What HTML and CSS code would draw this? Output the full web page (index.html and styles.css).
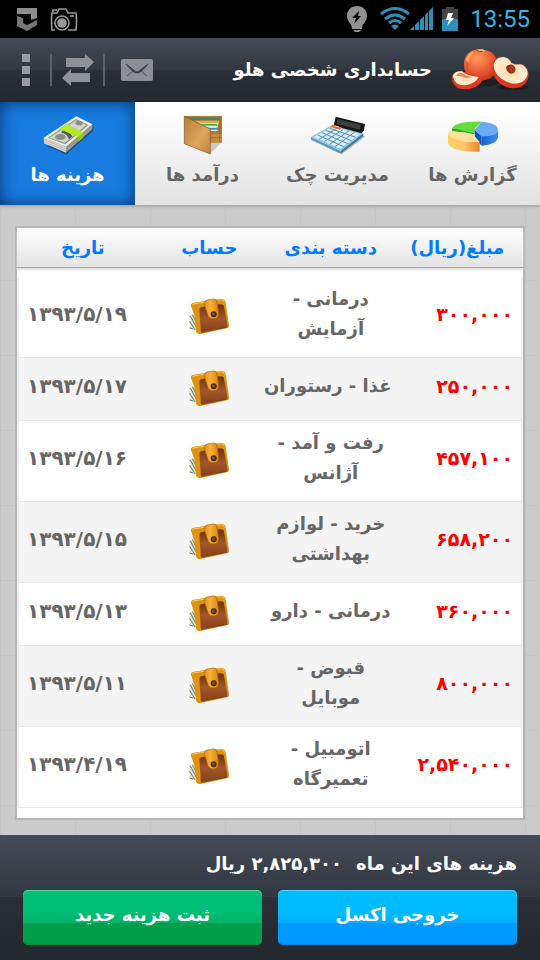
FILE: index.html
```html
<!DOCTYPE html>
<html lang="fa" dir="rtl">
<head>
    <meta charset="UTF-8">
    <meta name="viewport" content="width=device-width, initial-scale=1.0">
    <title>حسابداری شخصی هلو</title>
    <link rel="stylesheet" href="styles.css">
</head>
<body>
    <!-- Shared wallet icon -->
    <svg class="defs" width="0" height="0" aria-hidden="true">
        <defs>
            <linearGradient id="leather" x1="0" y1="0" x2="0" y2="1">
                <stop offset="0" stop-color="#6a3312"/>
                <stop offset=".5" stop-color="#a3562a"/>
                <stop offset="1" stop-color="#84401a"/>
            </linearGradient>
            <linearGradient id="strap" x1="0" y1="0" x2="1" y2="0">
                <stop offset="0" stop-color="#e08c10"/>
                <stop offset=".4" stop-color="#f8b13c"/>
                <stop offset="1" stop-color="#d98609"/>
            </linearGradient>
        </defs>
        <symbol id="wallet" viewBox="55 55 126 114">
            <path d="M57 112L74 104L84 156L57 149L63 138L57 130L62 120Z" fill="#dde3d5"/>
            <path d="M62 112L80 146M60 128L76 154M68 108L82 134M60 148L70 151" stroke="#6c8064" stroke-width="3"/>
            <path d="M64 82Q62 75 72 72L152 60Q166 60 168 70L178 140Q179 148 172 149L92 166Q79 168 79 155L74 110Z" fill="#df920f"/>
            <path d="M68 80Q68 76 76 75L152 63Q163 62 165 72" fill="none" stroke="#ffc555" stroke-width="3"/>
            <path d="M89 96Q88 86 98 85L150 77Q162 76 163 84L173 136Q174 145 166 147L95 161Q92 158 93 150Z" fill="url(#leather)"/>
            <path d="M94 162L174 145" stroke="#6b3010" stroke-width="2"/>
            <path d="M103 74Q104 66 112 64L132 61Q141 61 142 70L147 104Q147 119 133 121Q118 121 114 108Z" fill="url(#strap)" stroke="#a86608" stroke-width="2"/>
            <circle cx="132" cy="107" r="9" fill="#4a2a1c"/>
            <circle cx="132" cy="106" r="4" fill="#80604e"/>
        </symbol>
    </svg>

    <!-- Status bar -->
    <div class="status-bar" dir="ltr">
        <div class="status-group">
            <svg width="22" height="26" viewBox="0 0 22 26">
                <path d="M1 2H21V12L15 14V8H1Z" fill="#8d8d8d"/>
                <path d="M1 10L7 12V17L11 19L21 14V19L11 25L1 20Z" fill="#777"/>
            </svg>
            <svg class="camera" width="28" height="26" viewBox="0 0 28 26" fill="none" stroke="#999" stroke-width="1.6">
                <path d="M5 24H2Q1 14 2 7H7L9 3H16L18 7H26Q27 14 26 24H18M3 6V4H7"/>
                <circle cx="12" cy="17" r="7"/>
                <circle cx="12" cy="17" r="4" fill="#999"/>
                <path d="M20 10h4"/>
            </svg>
        </div>
        <div class="status-group">
            <svg width="22" height="28" viewBox="0 0 22 28">
                <path d="M11 1C5 1 1 5 1 11C1 17 6 18 6 24H16C16 18 21 17 21 11C21 5 17 1 11 1ZM7 25H15L13 27H9Z" fill="#919191"/>
                <path d="M13 6L6 13H10L8 19L15 11H12Z" fill="#000"/>
            </svg>
            <svg class="wifi" width="30" height="24" viewBox="0 0 30 24" fill="none" stroke="#2d8fb8" stroke-width="3">
                <path d="M1 7Q15 -4 29 7M5 12Q15 4 25 12M9 16Q15 11 21 16"/>
                <path d="M11 19Q15 16 19 19L15 23Z" fill="#2d8fb8" stroke="none"/>
            </svg>
            <svg width="24" height="24" viewBox="0 0 24 24" fill="#2d8fb8">
                <path d="M0 23L4 19V23ZM5 18L9 14V23H5ZM10 13L14 9V23H10ZM15 8L18 5V23H15ZM19 4L23 0V23H19Z"/>
            </svg>
            <svg class="battery" width="16" height="24" viewBox="0 0 16 24">
                <path d="M4 0H12V2H16V12H0V2H4Z" fill="#444"/>
                <path d="M0 12H16V24H0Z" fill="#2d8fb8"/>
                <path d="M6 6H11L9 11H12L5 19L7 13H4Z" fill="#fff"/>
            </svg>
            <span class="clock">13:55</span>
        </div>
    </div>

    <!-- Title bar -->
    <header class="title-bar">
        <svg class="logo" width="88" height="54" viewBox="0 0 264 162">
            <defs>
                <radialGradient id="peach" cx=".4" cy=".3" r=".75">
                    <stop offset="0" stop-color="#ff9a5c"/>
                    <stop offset=".5" stop-color="#f0643a"/>
                    <stop offset="1" stop-color="#c0301a"/>
                </radialGradient>
                <radialGradient id="flesh">
                    <stop offset="0" stop-color="#ffd9a4"/>
                    <stop offset="1" stop-color="#fff0d6"/>
                </radialGradient>
            </defs>
            <ellipse cx="110" cy="118" rx="50" ry="12" fill="#1b1e24"/>
            <ellipse cx="200" cy="132" rx="46" ry="9" fill="#1b1e24"/>
            <path d="M54 70C52 40 68 22 90 20Q104 16 118 22C142 26 155 44 154 68C152 98 132 112 106 112C76 112 56 98 54 70Z" fill="url(#peach)"/>
            <path d="M88 22C68 34 60 54 66 84" fill="none" stroke="#d94c26" stroke-width="3"/>
            <path d="M60 50Q66 30 86 24Q70 40 66 60Z" fill="#ffb04f"/>
            <path d="M90 20Q98 30 118 24L110 18Z" fill="#f5c458"/>
            <path d="M92 22Q100 28 110 25" fill="none" stroke="#7c3d16" stroke-width="3"/>
            <path d="M18 98Q16 132 50 139Q96 140 110 112Q108 104 98 102L46 84Q26 84 18 98Z" fill="#e03a22"/>
            <path d="M21 98Q28 82 48 85Q58 98 98 102Q92 118 64 126Q24 130 21 98Z" fill="url(#flesh)"/>
            <path d="M30 98Q40 84 52 92Q60 100 76 102Q60 108 50 101Q40 98 30 98Z" fill="#e58a56"/>
            <path d="M140 72C140 48 156 38 174 42Q190 44 196 58Q206 66 224 62C242 68 250 82 247 102C240 128 222 138 194 135C160 130 138 104 140 72Z" fill="#e0351f"/>
            <path d="M143 66C146 48 160 40 176 43Q190 46 196 60Q208 68 222 64C240 68 248 84 244 98C236 116 220 124 196 121C166 112 144 94 143 66Z" fill="url(#flesh)"/>
            <path d="M180 72Q186 62 200 65Q211 72 208 84Q202 95 191 91Q180 84 180 72Z" fill="#93321a"/>
            <path d="M188 70L199 87M196 68L204 80" stroke="#b85a36" stroke-width="2"/>
        </svg>
        <h1>حسابداری شخصی هلو</h1>
        <div class="actions">
            <button type="button" aria-label="پیام ها">
                <svg width="32" height="22" viewBox="0 0 32 22">
                    <rect width="32" height="22" rx="2" fill="#8c9096"/>
                    <path d="M5 5L14 12Q16 14 18 12L27 5Q20 14 16 14Q12 14 5 5Z" fill="#3c424b" stroke="#3c424b"/>
                    <path d="M6 17L12 12M26 17L20 12" stroke="#4b515a"/>
                </svg>
            </button>
            <button type="button" aria-label="انتقال">
                <svg width="32" height="32" viewBox="0 0 32 32" fill="#8e9298">
                    <path d="M4 4H23V0L32 8L23 17V13H4ZM28 19H9V15L0 24L9 32V28H28Z"/>
                </svg>
            </button>
            <button type="button" aria-label="منو">
                <svg width="8" height="32" viewBox="0 0 8 32" fill="#989ca2">
                    <path d="M0 0H8V8H0ZM0 12H8V20H0ZM0 24H8V32H0Z"/>
                </svg>
            </button>
        </div>
    </header>

    <!-- Tabs -->
    <nav class="tabs">
        <a class="tab" href="#reports">
            <svg width="52" height="40" viewBox="528 40 156 120">
                <defs>
                    <linearGradient id="pieGold" x1="0" y1="0" x2="1" y2="0">
                        <stop offset="0" stop-color="#ffd06a"/>
                        <stop offset=".5" stop-color="#ffc668"/>
                        <stop offset="1" stop-color="#e8862a"/>
                    </linearGradient>
                    <linearGradient id="pieBlue" x1="0" y1="0" x2="1" y2="0">
                        <stop offset="0" stop-color="#1b62cf"/>
                        <stop offset="1" stop-color="#3c8cf0"/>
                    </linearGradient>
                </defs>
                <path d="M543 80V92Q570 88 610 98V80Z" fill="#2fa81c"/>
                <path d="M543 80Q554 58 632 60L610 82Q610 90 608 94Q570 86 543 80Z" fill="#66dc3c"/>
                <path d="M611 84L632 104V132L611 112Z" fill="#1a56b8"/>
                <path d="M632 104Q676 102 681 86V108Q676 128 632 132Z" fill="url(#pieBlue)"/>
                <path d="M632 60Q680 64 681 84Q680 104 632 104L611 84Z" fill="#6aabf6"/>
                <path d="M531 92V126Q544 150 626 150V121Q550 124 531 92Z" fill="url(#pieGold)"/>
                <path d="M531 98Q532 86 542 87L606 98L626 121Q548 124 531 98Z" fill="#ffe09a"/>
            </svg>
            <span>گزارش ها</span>
        </a>
        <a class="tab" href="#cheques">
            <svg width="56" height="40" viewBox="113 40 168 120">
                <path d="M116 110L205 152L274 98L278 106L208 158L116 116Z" fill="#b9bdc0"/>
                <path d="M116 106V113L205 156V147Z" fill="#5b9ac0"/>
                <path d="M205 147V156L272 104V95Z" fill="#3d799f"/>
                <path d="M116 106L180 70L274 95L205 147Z" fill="#8fc4e2"/>
                <path d="M124 106L180 75L264 97L204 141Z" fill="#d8edf8"/>
                <path d="M136 100L214 135M149 93L226 126M161 86L238 117M172 80L250 107M140 113L195 79M156 120L212 84M172 128L229 88M188 135L246 92" stroke="#5590b8" stroke-width="3"/>
                <path d="M190 45L278 67L275 86L268 95L184 72Z" fill="#161616"/>
                <path d="M196 52L266 70L262 84L192 66Z" fill="#3f3f3f"/>
                <path d="M180 69L208 77L203 84L175 76Z" fill="#ee6e28"/>
                <path d="M186 72L200 76" stroke="#ffc090" stroke-width="3"/>
            </svg>
            <span>مدیریت چک</span>
        </a>
        <a class="tab" href="#income">
            <svg width="42" height="40" viewBox="543 42 126 120">
                <defs>
                    <linearGradient id="billfold" x1="0" y1="0" x2="1" y2="1">
                        <stop offset="0" stop-color="#b97d36"/>
                        <stop offset=".6" stop-color="#dca65c"/>
                        <stop offset="1" stop-color="#bd833c"/>
                    </linearGradient>
                </defs>
                <path d="M628 158L660 126H628Z" fill="#c9c9c9"/>
                <path d="M549 45H663V125H628Z" fill="#ad7632"/>
                <path d="M558 50H656V57H570Z" fill="#3f8a63"/>
                <path d="M570 59H656V68H590Z" fill="#d9aa68"/>
                <path d="M590 66H650V90H626Z" fill="#eef4fb"/>
                <path d="M594 68H648V74H606Z" fill="#4cb32c"/>
                <path d="M616 80H652V86H628Z" fill="#4288d4"/>
                <path d="M628 94H662V124H628Z" fill="#c68d45"/>
                <path d="M628 97H662M628 110H662M656 48V122" stroke="#8b5a22" stroke-width="2"/>
                <path d="M550 46L628 84V159L550 128Z" fill="url(#billfold)" stroke="#80501c" stroke-width="2"/>
            </svg>
            <span>درآمد ها</span>
        </a>
        <a class="tab active" href="#expenses" aria-current="page">
            <svg width="52" height="40" viewBox="25 24 156 120">
                <path d="M40 118L98 142L178 72L180 60L140 60Z" fill="#12508f"/>
                <path d="M30 92L97 120V137L31 109Z" fill="#dcddcc"/>
                <path d="M97 120L176 52V67L97 137Z" fill="#8f9386"/>
                <path d="M31 98L97 126L176 58M31 104L97 132L176 63" fill="none" stroke="#a9ac9c" stroke-width="2"/>
                <path d="M30 92L128 28L176 52L97 120Z" fill="#eeeee2"/>
                <path d="M42 92L127 36L164 54L95 112Z" fill="#8e9286"/>
                <path d="M47 92L127 40L158 54L94 107Z" fill="#d3d5c8"/>
                <ellipse cx="80" cy="90" rx="16" ry="9" fill="#8b8f84"/>
                <ellipse cx="136" cy="48" rx="11" ry="7" fill="#8b8f84"/>
                <path d="M84 72Q104 68 116 88L106 97Q98 78 84 78Z" fill="#555c58"/>
                <path d="M78 66L97 52L149 77V92L134 105V90Z" fill="#8ac80c"/>
                <path d="M78 66L97 52L149 77L134 90Z" fill="#b4ec25"/>
            </svg>
            <span>هزینه ها</span>
        </a>
    </nav>

    <!-- Expense list -->
    <main>
        <div class="panel">
            <table>
                <colgroup>
                    <col class="col-amount">
                    <col class="col-category">
                    <col class="col-account">
                    <col class="col-date">
                </colgroup>
                <thead>
                    <tr>
                        <th scope="col">مبلغ(ریال)</th>
                        <th scope="col">دسته بندی</th>
                        <th scope="col">حساب</th>
                        <th scope="col">تاریخ</th>
                    </tr>
                </thead>
                <tbody>
                    <tr>
                        <td class="amount">۳۰۰,۰۰۰</td>
                        <td>درمانی -<br>آزمایش</td>
                        <td><svg class="wallet"><use href="#wallet"/></svg></td>
                        <td class="date">۱۳۹۳/۵/۱۹</td>
                    </tr>
                    <tr>
                        <td class="amount">۲۵۰,۰۰۰</td>
                        <td>غذا - رستوران</td>
                        <td><svg class="wallet"><use href="#wallet"/></svg></td>
                        <td class="date">۱۳۹۳/۵/۱۷</td>
                    </tr>
                    <tr>
                        <td class="amount">۴۵۷,۱۰۰</td>
                        <td>رفت و آمد -<br>آژانس</td>
                        <td><svg class="wallet"><use href="#wallet"/></svg></td>
                        <td class="date">۱۳۹۳/۵/۱۶</td>
                    </tr>
                    <tr>
                        <td class="amount">۶۵۸,۲۰۰</td>
                        <td>خرید - لوازم<br>بهداشتی</td>
                        <td><svg class="wallet"><use href="#wallet"/></svg></td>
                        <td class="date">۱۳۹۳/۵/۱۵</td>
                    </tr>
                    <tr>
                        <td class="amount">۳۶۰,۰۰۰</td>
                        <td>درمانی - دارو</td>
                        <td><svg class="wallet"><use href="#wallet"/></svg></td>
                        <td class="date">۱۳۹۳/۵/۱۳</td>
                    </tr>
                    <tr>
                        <td class="amount">۸۰۰,۰۰۰</td>
                        <td>قبوض -<br>موبایل</td>
                        <td><svg class="wallet"><use href="#wallet"/></svg></td>
                        <td class="date">۱۳۹۳/۵/۱۱</td>
                    </tr>
                    <tr>
                        <td class="amount">۲,۵۴۰,۰۰۰</td>
                        <td>اتومبیل -<br>تعمیرگاه</td>
                        <td><svg class="wallet"><use href="#wallet"/></svg></td>
                        <td class="date">۱۳۹۳/۴/۱۹</td>
                    </tr>
                </tbody>
            </table>
        </div>
    </main>

    <!-- Month total and actions -->
    <footer>
        <p class="total"><span>هزینه های این ماه</span><span>۲,۸۲۵,۳۰۰ ریال</span></p>
        <div class="buttons">
            <button type="button" class="btn btn-blue">خروجی اکسل</button>
            <button type="button" class="btn btn-green">ثبت هزینه جدید</button>
        </div>
    </footer>
</body>
</html>
```
FILE: styles.css
```css
* {
    box-sizing: border-box;
}

body {
    margin: 0;
    min-height: 100vh;
    display: flex;
    flex-direction: column;
    font-family: "DejaVu Sans", sans-serif;
    font-weight: bold;
    font-size: 18px;
    color: #666;
    background-color: #ccc;
}

svg {
    display: block;
    flex-shrink: 0;
}

.defs {
    position: absolute;
}

button {
    font: inherit;
    border: none;
    cursor: pointer;
}

/* Status bar */
.status-bar {
    display: flex;
    justify-content: space-between;
    align-items: center;
    height: 38px;
    padding: 0 10px 0 16px;
    background-color: #000;
}

.status-group {
    display: flex;
    align-items: center;
}

.camera {
    margin-left: 12px;
}

.wifi {
    margin-left: 12px;
}

.battery {
    margin: 0 12px 0 8px;
}

.clock {
    font-family: Roboto, sans-serif;
    font-weight: normal;
    font-size: 24px;
    color: #33b5e5;
}

/* Title bar */
.title-bar {
    display: flex;
    align-items: center;
    height: 64px;
    padding: 0 6px 0 22px;
    background: linear-gradient(#434a55, #323840 50%, #2a2f38 51%, #24282f);
}

h1 {
    margin: 0 14px 0 auto;
    font-size: 18px;
    line-height: 32px;
    color: #fff;
}

.title-bar .actions {
    display: flex;
    align-items: center;
}

.actions button {
    display: flex;
    align-items: center;
    height: 32px;
    padding: 0 9px 0 10px;
    background: none;
}

.actions button + button {
    border-right: 2px solid #5b616b;
}

.actions button:first-child {
    padding: 0 0 0 16px;
}

.actions button:last-child {
    padding: 0 20px 0 0;
}

.title-bar h1 + .actions {
    margin-right: auto;
}

/* Tabs */
.tabs {
    display: grid;
    grid-template-columns: repeat(4, 1fr);
    height: 103px;
    background: linear-gradient(#fff 10%, #e2e2e2);
    box-shadow: 0 2px 2px #aaa;
    position: relative;
}

.tab {
    display: flex;
    flex-direction: column;
    align-items: center;
    gap: 4px;
    padding-top: 13px;
    color: #666;
    line-height: 32px;
    text-decoration: none;
}

.tab.active {
    color: #fff;
    background-color: #187be0;
    box-shadow: inset 0 0 16px #06336b;
}

/* Expense table */
main {
    flex: 1;
    padding: 21px 15px 15px;
    background-color: #cbcbcb;
    background-image:
        repeating-linear-gradient(90deg, rgba(0, 0, 0, 0.03) 0 1px, transparent 1px 75px),
        repeating-linear-gradient(rgba(0, 0, 0, 0.03) 0 1px, transparent 1px 75px);
}

.panel {
    padding-bottom: 10px;
    background-color: #fff;
    border: 2px solid #b5b5b5;
}

table {
    width: 100%;
    table-layout: fixed;
    border-collapse: separate;
    border-spacing: 0;
}

.col-amount {
    width: 26%;
}

.col-category {
    width: 24%;
}

.col-account {
    width: 24%;
}

thead tr {
    background: linear-gradient(#fff, #e2e2e2);
    box-shadow: 0 2px 2px #ddd;
}

th {
    height: 40px;
    padding: 0;
    color: #007aff;
    line-height: 30px;
    border-bottom: 1px solid #aaa;
}

tbody::before {
    content: "";
    display: table-row;
    height: 9px;
}

td {
    height: 63px;
    padding: 7px 0 13px;
    line-height: 30px;
    text-align: center;
    white-space: nowrap;
    border-bottom: 1px solid #e8e8e8;
}

tbody tr:nth-child(even) {
    background-color: #f4f4f4;
}

td:first-child {
    border-right: 2px solid #eee;
}

td:last-child {
    border-left: 2px solid #eee;
}

.amount {
    padding-right: 8px;
    font-size: 19px;
    color: #f00;
    text-align: right;
}

.date {
    padding-left: 8px;
    font-size: 20px;
    text-align: left;
}

.wallet {
    width: 42px;
    height: 38px;
    margin: 4px auto 0;
}

/* Footer */
footer {
    height: 125px;
    padding: 14px 23px 16px;
    color: #fff;
    background: linear-gradient(#454b56, #323841 49%, #2a2e37 50%, #23272e);
}

.total {
    display: flex;
    gap: 14px;
    margin: 0 0 11px;
    line-height: 30px;
}

.buttons {
    display: grid;
    grid-template-columns: 1fr 1fr;
    gap: 16px;
}

.btn {
    height: 55px;
    padding: 0 0 6px;
    color: #fff;
    border-radius: 5px;
}

.btn-blue {
    background: linear-gradient(#00bcff 40%, #00adff 60%, #009aff 61%);
    box-shadow: inset 0 1px 1px #5bd2ff, inset 0 -1px 1px #0080d8;
}

.btn-green {
    background: linear-gradient(#00be76 40%, #00b265 60%, #009d4b 61%);
    box-shadow: inset 0 1px 1px #56d8a2, inset 0 -1px 1px #008640;
}
```
